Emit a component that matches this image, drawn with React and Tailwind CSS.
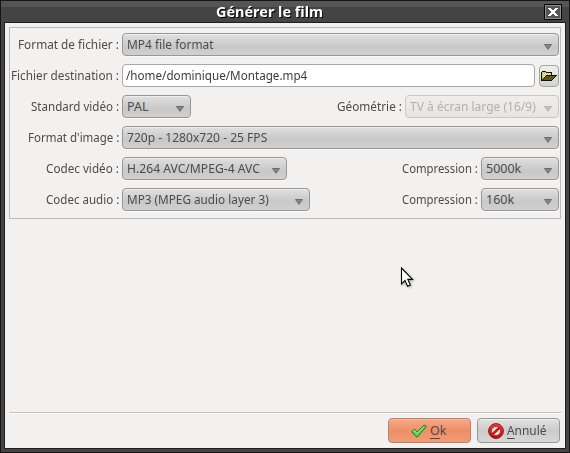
import { useLayoutEffect, useRef, useState } from "react";

// Text condensed horizontally to a given width.
function Fit({ w, children, className = "" }) {
  const ref = useRef(null);
  const [scale, setScale] = useState(1);
  useLayoutEffect(() => {
    setScale(w / ref.current.offsetWidth);
  }, [w]);
  return (
    <span className={`flex shrink-0 whitespace-nowrap ${className}`} style={{ width: w }}>
      <span ref={ref} className="inline-block shrink-0 origin-left" style={{ transform: `scaleX(${scale})` }}>
        {children}
      </span>
    </span>
  );
}

function Arrow({ faded }) {
  return (
    <svg width="8" height="6" viewBox="0 0 8 6" className="mt-[5px] shrink-0">
      <path d="M.5 .5H7.5L4 5.3Z" fill={faded ? "#c4c3c1" : "#868686"} stroke={faded ? "#b5b4b2" : "#6c6c6c"} strokeWidth="1" />
    </svg>
  );
}

function Combo({ text, tw, className = "", disabled }) {
  const look = disabled
    ? "border-[#c9c8c6] from-[#efeeec] to-[#e6e5e3] text-[#b3b1ae]"
    : "border-[#979797] from-[#e0e0e0] via-[#c8c8c8] via-60% to-[#d0d0d0] text-[#4c4c4c] shadow-[inset_0_1px_0_#eeeeee,0_1px_0_#fafafa]";
  return (
    <div className={`flex h-[23px] shrink-0 items-center justify-between rounded border bg-linear-to-b pr-[6px] pl-[4px] ${look} ${className}`}>
      <Fit w={tw}>{text}</Fit>
      <Arrow faded={disabled} />
    </div>
  );
}

function Label({ w, children, className = "" }) {
  return (
    <div className={`flex shrink-0 justify-end pr-[3px] ${className}`}>
      <Fit w={w}>{children}</Fit>
    </div>
  );
}

function Row({ label, w, children }) {
  return (
    <div className="flex h-[23px] items-center">
      <Label w={w} className="w-[112px]">{label}</Label>
      {children}
    </div>
  );
}

function FolderIcon() {
  return (
    <svg width="16" height="12" viewBox="0 0 16 12" shapeRendering="crispEdges">
      <path d="M1 10V2H2V1H5V2H11V5H5L1 10Z" fill="#c8c474" />
      <path d="M2 3h1v1h-1zM4 3h1v1h-1zM6 3h1v1h-1zM8 3h1v1h-1zM3 4h1v1h-1zM5 4h1v1h-1zM7 4h1v1h-1zM9 4h1v1h-1zM2 5h1v1h-1zM4 5h1v1h-1zM3 6h1v1h-1zM2 7h1v1h-1z" fill="#f5f2bd" />
      <path d="M5 5H15L11 10H1Z" fill="#5c591b" />
      <path d="M0 2h1v8h-1zM1 1h4v1h-4zM5 2h6v1h-6zM10 3h1v2h-1zM5 5h11v1h-11zM0 10h11v1h-11zM4 6h1v1h-1zM3 7h1v1h-1zM2 8h1v1h-1zM1 9h1v1h-1zM14 6h1v1h-1zM13 7h1v1h-1zM12 8h1v1h-1zM11 9h1v1h-1z" fill="#141407" />
    </svg>
  );
}

function CheckIcon() {
  return (
    <svg width="16" height="14" viewBox="0 0 16 14">
      <path d="M.8 7.6L3.6 5.2L6.2 8.2L13 1L15.3 2.3L6.7 12.7H5Z" fill="#55d34c" stroke="#17811c" strokeWidth="1" strokeLinejoin="round" />
      <path d="M2.2 7.3L3.5 6.4L6.1 9.6L13.2 2.2" fill="none" stroke="#a6f39c" strokeWidth=".9" />
    </svg>
  );
}

function ForbiddenIcon() {
  return (
    <svg width="16" height="16" viewBox="0 0 16 16">
      <defs>
        <linearGradient id="red" x2="0" y2="1">
          <stop stopColor="#ee4343" />
          <stop offset="1" stopColor="#bd0b0b" />
        </linearGradient>
      </defs>
      <circle cx="8" cy="8" r="7.4" fill="url(#red)" stroke="#a30b0b" />
      <circle cx="8" cy="8" r="4.6" fill="#dededb" stroke="#a01010" strokeWidth=".7" />
      <path d="M4.4 11.4L11.6 4.6" stroke="#c81616" strokeWidth="2.5" />
    </svg>
  );
}

function Mnemonic({ children }) {
  return <span className="inline-block h-[16px] border-b border-[#4c4c4c]">{children}</span>;
}

export default function App() {
  return (
    <div className="relative flex h-[453px] w-[570px] flex-col border border-[#171415] bg-[#444444] font-['Noto_Sans','Open_Sans',sans-serif] text-[12.5px] leading-[16px] text-[#4c4c4c]">
      <header className="flex h-[21px] shrink-0 items-center bg-linear-to-b from-[#555555] from-[28%] to-[#444444] to-[28%]">
        <div className="flex flex-1 justify-center pr-[7px]">
          <Fit w={107} className="text-[13.5px] font-bold text-white [text-shadow:1px_1px_0_#000]">Générer le film</Fit>
        </div>
        <div className="mt-[1px] mr-[7px] flex h-[16px] w-[18px] items-center justify-center border border-black bg-[#555555] shadow-[inset_0_0_0_1px_#909090]">
          <svg width="10" height="8" viewBox="0 0 10 8" shapeRendering="crispEdges">
            <path d="M0 0h3v1h-3zM7 0h3v1h-3zM1 1h3v1h-3zM6 1h3v1h-3zM2 2h6v1h-6zM3 3h4v2h-4zM2 5h6v1h-6zM1 6h3v1h-3zM6 6h3v1h-3zM0 7h3v1h-3zM7 7h3v1h-3z" fill="#fff" />
          </svg>
        </div>
      </header>
      <main className="mx-[3px] mb-[3px] flex flex-1 flex-col border border-[#201d1e] bg-[#f2f1ef] px-[4px] pt-[4px]">
        <section className="flex h-[192px] w-[552px] flex-col gap-[8px] border border-[#bdbbb8] pt-[5px]">
          <Row label="Format de fichier :" w={101}>
            <Combo text="MP4 file format" tw={87} className="w-[437px]" />
          </Row>
          <Row label="Fichier destination :" w={108}>
            <div className="flex h-[23px] w-[413px] items-center rounded border border-[#a9a7a5] bg-white pl-[3px] text-[#3c3c3c]">
              <Fit w={181}>/home/dominique/Montage.mp4</Fit>
            </div>
            <button className="ml-[4px] flex h-[22px] w-[20px] items-center justify-center rounded border border-[#a5a4a2] bg-linear-to-b from-[#f0f0ef] to-[#d2d2d2]">
              <span className="shrink-0 pt-px"><FolderIcon /></span>
            </button>
          </Row>
          <Row label="Standard vidéo :" w={88}>
            <Combo text="PAL" tw={21} className="w-[69px]" />
            <Label w={65} className="w-[214px]">Géométrie :</Label>
            <Combo disabled text="TV à écran large (16/9)" tw={126} className="w-[154px]" />
          </Row>
          <Row label="Format d'image :" w={91}>
            <Combo text="720p - 1280x720 - 25 FPS" tw={140} className="w-[437px]" />
          </Row>
          <Row label="Codec vidéo :" w={73}>
            <Combo text="H.264 AVC/MPEG-4 AVC" tw={133} className="w-[165px]" />
            <Label w={76} className="w-[194px]">Compression :</Label>
            <Combo text="5000k" tw={35} className="w-[78px]" />
          </Row>
          <Row label="Codec audio :" w={73}>
            <Combo text="MP3 (MPEG audio layer 3)" tw={142} className="w-[188px]" />
            <Label w={76} className="w-[171px]">Compression :</Label>
            <Combo text="160k" tw={28} className="w-[78px]" />
          </Row>
        </section>
        <footer className="mt-auto flex h-[36px] w-[552px] justify-end gap-[6px] border-t border-[#c4c2c0] pt-[5px] pr-px shadow-[inset_0_1px_0_#ffffff]">
          <button className="flex h-[25px] w-[83px] items-center rounded border border-[#bd8069] bg-linear-to-b from-[#f9a988] via-[#ed8f68] to-[#f19b76] pl-[22px] shadow-[inset_0_1px_0_#fbb79b]">
            <CheckIcon />
            <Fit w={16} className="ml-[3px]"><Mnemonic>O</Mnemonic>k</Fit>
          </button>
          <button className="flex h-[25px] w-[83px] items-center rounded border border-[#979797] bg-linear-to-b from-[#e2e2e2] via-[#cbcbcb] to-[#d7d7d7] pl-[10px] shadow-[inset_0_1px_0_#f0f0f0]">
            <ForbiddenIcon />
            <Fit w={39} className="ml-[3px]"><Mnemonic>A</Mnemonic>nnulé</Fit>
          </button>
        </footer>
      </main>
      <svg className="absolute top-[266px] left-[399px] drop-shadow-[1px_1px_1px_#0005]" width="14" height="21" viewBox="0 0 14 21">
        <path d="M1.5 1V17L5 13.4L7.5 19.2L10.3 18L7.8 12.4H12.5Z" fill="#fff" stroke="#000" strokeWidth="1.1" />
      </svg>
    </div>
  );
}
